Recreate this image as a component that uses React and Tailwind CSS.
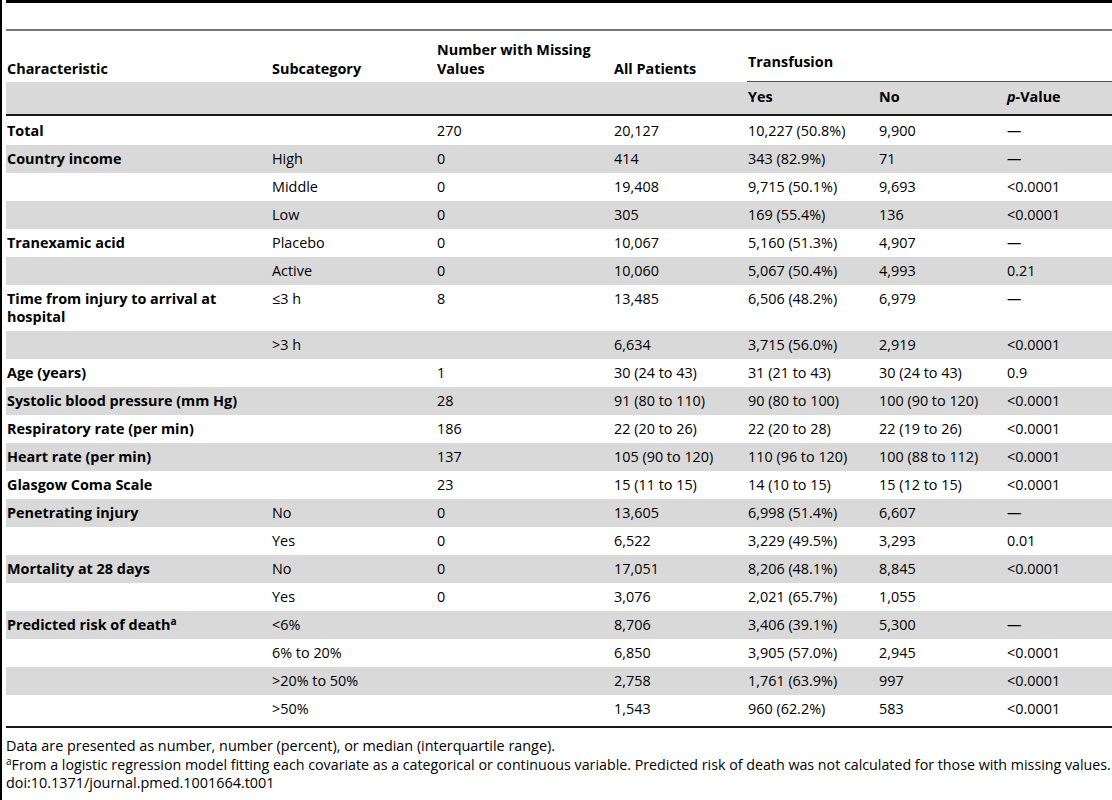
const rows = [
  { c: 'Total', s: '', m: '270', a: '20,127', y: '10,227 (50.8%)', n: '9,900', p: '—' },
  { c: 'Country income', s: 'High', m: '0', a: '414', y: '343 (82.9%)', n: '71', p: '—' },
  { c: '', s: 'Middle', m: '0', a: '19,408', y: '9,715 (50.1%)', n: '9,693', p: '<0.0001' },
  { c: '', s: 'Low', m: '0', a: '305', y: '169 (55.4%)', n: '136', p: '<0.0001' },
  { c: 'Tranexamic acid', s: 'Placebo', m: '0', a: '10,067', y: '5,160 (51.3%)', n: '4,907', p: '—' },
  { c: '', s: 'Active', m: '0', a: '10,060', y: '5,067 (50.4%)', n: '4,993', p: '0.21' },
  { c: 'Time from injury to arrival at hospital', s: '≤3 h', m: '8', a: '13,485', y: '6,506 (48.2%)', n: '6,979', p: '—' },
  { c: '', s: '>3 h', m: '', a: '6,634', y: '3,715 (56.0%)', n: '2,919', p: '<0.0001' },
  { c: 'Age (years)', s: '', m: '1', a: '30 (24 to 43)', y: '31 (21 to 43)', n: '30 (24 to 43)', p: '0.9' },
  { c: 'Systolic blood pressure (mm Hg)', s: '', m: '28', a: '91 (80 to 110)', y: '90 (80 to 100)', n: '100 (90 to 120)', p: '<0.0001' },
  { c: 'Respiratory rate (per min)', s: '', m: '186', a: '22 (20 to 26)', y: '22 (20 to 28)', n: '22 (19 to 26)', p: '<0.0001' },
  { c: 'Heart rate (per min)', s: '', m: '137', a: '105 (90 to 120)', y: '110 (96 to 120)', n: '100 (88 to 112)', p: '<0.0001' },
  { c: 'Glasgow Coma Scale', s: '', m: '23', a: '15 (11 to 15)', y: '14 (10 to 15)', n: '15 (12 to 15)', p: '<0.0001' },
  { c: 'Penetrating injury', s: 'No', m: '0', a: '13,605', y: '6,998 (51.4%)', n: '6,607', p: '—' },
  { c: '', s: 'Yes', m: '0', a: '6,522', y: '3,229 (49.5%)', n: '3,293', p: '0.01' },
  { c: 'Mortality at 28 days', s: 'No', m: '0', a: '17,051', y: '8,206 (48.1%)', n: '8,845', p: '<0.0001' },
  { c: '', s: 'Yes', m: '0', a: '3,076', y: '2,021 (65.7%)', n: '1,055', p: '' },
  { c: 'Predicted risk of death', sup: 'a', s: '<6%', m: '', a: '8,706', y: '3,406 (39.1%)', n: '5,300', p: '—' },
  { c: '', s: '6% to 20%', m: '', a: '6,850', y: '3,905 (57.0%)', n: '2,945', p: '<0.0001' },
  { c: '', s: '>20% to 50%', m: '', a: '2,758', y: '1,761 (63.9%)', n: '997', p: '<0.0001' },
  { c: '', s: '>50%', m: '', a: '1,543', y: '960 (62.2%)', n: '583', p: '<0.0001' },
];

const cols = 'grid grid-cols-[265px_165px_177px_134px_131px_128px_1fr]';

const Row = ({ r, shaded }) => (
  <div className={`${cols} leading-[18px] ${shaded ? 'bg-[#d9d9d9]' : ''}`}>
    <div className="pl-[1px] pr-3 py-[5px] font-bold">
      {r.c}
      {r.sup && <sup className="text-[10px] font-bold">{r.sup}</sup>}
    </div>
    <div className="pl-[1px] py-[5px]">{r.s}</div>
    <div className="pl-[1px] py-[5px]">{r.m}</div>
    <div className="pl-[1px] py-[5px]">{r.a}</div>
    <div className="pl-[1px] py-[5px]">{r.y}</div>
    <div className="pl-[1px] py-[5px]">{r.n}</div>
    <div className="pl-[1px] py-[5px]">{r.p}</div>
  </div>
);

export default function App() {
  return (
    <div className="w-[1112px] h-[800px] bg-white flex text-[14.4px] text-black overflow-hidden font-['Open_Sans',sans-serif]">
      <div className="w-[2px] shrink-0 bg-black" />
      <div className="w-[4px] shrink-0" />
      <div className="flex-1 min-w-0 flex flex-col">
        {/* caption area */}
        <div className="h-[3px] bg-black" />
        <div className="h-[26px]" />
        <div className="h-[2px] bg-[#777]" />

        {/* header */}
        <div className={`${cols} h-[51px] font-bold`}>
          <div className="pl-[1px] flex items-end pb-[4px] leading-[19px]">Characteristic</div>
          <div className="pl-[1px] flex items-end pb-[4px] leading-[19px]">Subcategory</div>
          <div className="pl-[1px] flex items-end pb-[4px] leading-[19px]">Number with Missing<br />Values</div>
          <div className="pl-[1px] flex items-end pb-[4px] leading-[19px]">All Patients</div>
          <div className="col-span-3 pl-[1px] flex items-end pb-[10px] leading-[18px] border-b border-[#555]">Transfusion</div>
        </div>
        <div className={`${cols} h-[32px] bg-[#d9d9d9] font-bold leading-[18px]`}>
          <div />
          <div />
          <div />
          <div />
          <div className="pl-[1px] pt-[6px]">Yes</div>
          <div className="pl-[1px] pt-[6px]">No</div>
          <div className="pl-[1px] pt-[6px]"><i>p</i>-Value</div>
        </div>
        <div className="h-[2px] bg-[#1a1a1a]" />

        {/* body */}
        <div className="flex flex-col pt-[1px]">
          {rows.map((r, i) => (
            <Row key={i} r={r} shaded={i % 2 === 1} />
          ))}
        </div>
        <div className="mt-[3px] h-[2px] bg-[#1a1a1a]" />

        {/* footnotes */}
        <div className="pt-[9px] leading-[18.5px]">
          <p>Data are presented as number, number (percent), or median (interquartile range).</p>
          <p className="whitespace-nowrap text-[14.25px]">
            <sup className="text-[10px]">a</sup>From a logistic regression model fitting each covariate as a categorical or continuous variable. Predicted risk of death was not calculated for those with missing values.
          </p>
          <p>doi:10.1371/journal.pmed.1001664.t001</p>
        </div>
      </div>
    </div>
  );
}
